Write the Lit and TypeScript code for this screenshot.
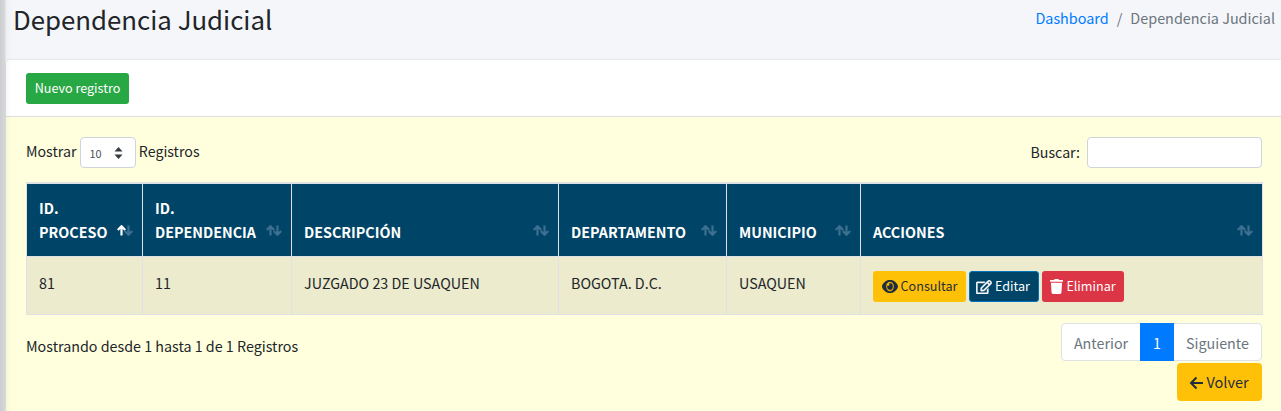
import { LitElement, html, css } from "lit";
import { customElement } from "lit/decorators.js";

const sortIcon = (active = false) => html`<svg class="sort" viewBox="0 0 16 11" width="16" height="11" aria-hidden="true">
  <path class=${active ? "on" : "off"} d="M4.500 10.500V1.500M.8 5 4.500 1.200 8.200 5" />
  <path class="off" d="M11.500.5v9M7.800 6l3.700 3.800L15.200 6" />
</svg>`;

const cols = [
  { label: ["ID.", "PROCESO"], w: 116, active: true },
  { label: ["ID.", "DEPENDENCIA"], w: 149 },
  { label: ["DESCRIPCIÓN"], w: 267 },
  { label: ["DEPARTAMENTO"], w: 168 },
  { label: ["MUNICIPIO"], w: 134 },
  { label: ["ACCIONES"], w: 402 },
];

@customElement("app-root")
export class AppRoot extends LitElement {
  static styles = css`
    :host {
      display: block;
      width: 1281px;
      height: 411px;
      overflow: hidden;
      background: #f4f6f9;
      font-family: "Noto Sans CJK JP", "Noto Sans", sans-serif;
      font-size: 14.3px;
      color: #212529;
      box-sizing: border-box;
      padding-left: 6px;
      position: relative;
    }
    .edge {
      position: absolute;
      left: 0;
      top: 0;
      bottom: 0;
      width: 12px;
      pointer-events: none;
      background: linear-gradient(90deg, rgba(0,0,0,.17), rgba(0,0,0,.12) 5px, rgba(0,0,0,.03) 6px, rgba(0,0,0,0) 12px);
    }
    .top {
      height: 60px;
      display: flex;
      justify-content: space-between;
      padding: 0 6px 0 8px;
      box-sizing: border-box;
    }
    h1 {
      margin: 0 0 0 -1px;
      font-size: 25.8px;
      font-weight: 400;
      line-height: 37px;
    }
    .crumb {
      font-size: 14.4px;
      line-height: 36px;
      color: #6c757d;
      display: flex;
      gap: 8px;
    }
    .crumb a { color: #007bff; }
    .card {
      background: #fff;
      border-radius: 4px 0 0 0;
      box-shadow: 0 0 2px rgba(0, 0, 0, 0.2);
      height: 351px;
    }
    .head {
      height: 57px;
      padding: 13px 20px 0;
      box-sizing: border-box;
      border-bottom: 1px solid #dcdee2;
      background: #fff;
      border-radius: 4px 0 0 0;
    }
    .btn {
      display: inline-flex;
      align-items: center;
      justify-content: center;
      gap: 3px;
      border-radius: 3px;
      font-size: 12.6px;
      line-height: 1;
      height: 31px;
      box-sizing: border-box;
      white-space: nowrap;
    }
    .new { width: 103px; }
    .green { background: #28a745; color: #fff; }
    .amber { background: #ffc107; color: #1f2d3d; }
    .navy { background: #004567; color: #fff; border: 1px solid #0072bd; }
    .red { background: #dc3545; color: #fff; }
    .consult { width: 93px; }
    .edit { width: 70px; padding-right: 2px; }
    .del { width: 82px; }
    .body {
      background: #ffffdd;
      height: 294px;
      padding: 20px 19px 0 20px;
      box-sizing: border-box;
    }
    .controls {
      display: flex;
      justify-content: space-between;
      height: 31px;
      margin-bottom: 14px;
    }
    .len, .search {
      display: flex;
      align-items: center;
      gap: 3px;
      font-size: 14.2px;
      height: 31px;
    }
    .len > span { position: relative; top: -2px; }
    .search > span { position: relative; top: -1px; }
    .select {
      width: 56px;
      height: 31px;
      margin-left: 1px;
      margin-right: -0.6px;
      box-sizing: border-box;
      border: 1px solid #ced4da;
      border-radius: 4px;
      background: #fff;
      display: flex;
      align-items: center;
      justify-content: space-between;
      padding: 0 12px 0 8px;
      font-size: 10.8px;
      color: #495057;
    }
    .search { gap: 7px; }
    .input {
      width: 175px;
      height: 31px;
      box-sizing: border-box;
      border: 1px solid #ced4da;
      border-radius: 4px;
      background: #fff;
    }
    table {
      border-collapse: collapse;
      table-layout: fixed;
      width: 1236px;
      border: 1px solid #dee2e6;
    }
    th {
      background: #004567;
      color: #fff;
      font-size: 14.3px;
      font-weight: 700;
      text-align: left;
      line-height: 24px;
      padding: 12px;
      height: 73px;
      box-sizing: border-box;
      vertical-align: bottom;
      position: relative;
      border-left: 1px solid #dee2e6;
      border-right: 1px solid #dee2e6;
      border-top: 2px solid #dee2e6;
    }
    th div { white-space: nowrap; }
    .sort {
      position: absolute;
      right: 9px;
      bottom: 20px;
      fill: none;
      stroke-width: 2.2;
    }
    .sort path.off { stroke: #3d7090; }
    .sort path.on { stroke: #fff; }
    td {
      background: #ecebcd;
      font-size: 14.3px;
      height: 58px;
      padding: 0 12px;
      box-sizing: border-box;
      border: 1px solid #dee2e6;
      white-space: nowrap;
      position: relative;
    }
    td span.cell { position: relative; top: -3px; }
    .actions { display: flex; gap: 3px; padding-top: 2px; }
    .foot {
      display: flex;
      justify-content: space-between;
      align-items: flex-start;
      padding-top: 8px;
    }
    .info { font-size: 14.3px; padding-top: 12px; }
    .right { display: flex; flex-direction: column; align-items: flex-end; gap: 2px; }
    .pager {
      display: flex;
      width: 201px;
      height: 38px;
      border: 1px solid #dee2e6;
      border-radius: 4px;
      box-sizing: border-box;
      background: #fff;
      font-size: 14.3px;
      color: #6c757d;
      align-items: stretch;
    }
    .pager span { display: flex; align-items: center; justify-content: center; flex: none; }
    .pager .prev { width: 78px; }
    .pager .cur { background: #007bff; color: #fff; margin: -1px 0; width: 34px; }
    .pager .next { width: 87px; }
    .back { width: 85px; height: 38px; font-size: 14.5px; border-radius: 4px; padding: 1px 1px 0 0; }
    svg.ic { display: block; flex: none; }
    svg.bold path { stroke: currentColor; stroke-width: 14; }
  `;

  render() {
    return html`
      <div class="top">
        <h1>Dependencia Judicial</h1>
        <div class="crumb"><a>Dashboard</a><span>/</span><span>Dependencia Judicial</span></div>
      </div>
      <div class="card">
        <div class="head"><span class="btn green new">Nuevo registro</span></div>
        <div class="body">
          <div class="controls">
            <div class="len">
              <span>Mostrar</span>
              <div class="select">
                <span>10</span>
                <svg width="9" height="14" viewBox="0 0 9 14" aria-hidden="true"><path fill="#343a40" d="M4.500 1 8.500 5.600H.5zM4.500 13 .5 8.400h8z"/></svg>
              </div>
              <span>Registros</span>
            </div>
            <div class="search"><span>Buscar:</span><div class="input"></div></div>
          </div>
          <table>
            <colgroup>${cols.map((c) => html`<col style="width:${c.w}px" />`)}</colgroup>
            <thead>
              <tr>
                ${cols.map(
                  (c) => html`<th>${c.label.map((l) => html`<div>${l}</div>`)}${sortIcon(!!c.active)}</th>`
                )}
              </tr>
            </thead>
            <tbody>
              <tr>
                <td><span class="cell">81</span></td>
                <td><span class="cell">11</span></td>
                <td><span class="cell">JUZGADO 23 DE USAQUEN</span></td>
                <td><span class="cell">BOGOTA. D.C.</span></td>
                <td><span class="cell">USAQUEN</span></td>
                <td>
                  <div class="actions">
                    <span class="btn amber consult">
                      <svg class="ic bold" width="16" height="13" viewBox="0 64 576 384" preserveAspectRatio="none" aria-hidden="true"><path fill="currentColor" d="M572.520 241.400C518.290 135.590 410.930 64 288 64S57.680 135.640 3.480 241.410a32.350 32.350 0 0 0 0 29.190C57.710 376.410 165.070 448 288 448s230.320-71.640 284.520-177.410a32.350 32.350 0 0 0 0-29.190zM288 400a144 144 0 1 1 144-144 143.930 143.930 0 0 1-144 144zm0-240a95.310 95.310 0 0 0-25.310 3.790 47.850 47.850 0 0 1-66.900 66.900A95.780 95.780 0 1 0 288 160z"/></svg>
                      Consultar
                    </span>
                    <span class="btn navy edit">
                      <svg class="ic bold" width="16" height="14" viewBox="0 0 576 512" aria-hidden="true"><path fill="currentColor" d="m402.300 344.900 32-32c5-5 13.700-1.500 13.700 5.700V464c0 26.500-21.500 48-48 48H48c-26.500 0-48-21.500-48-48V112c0-26.500 21.500-48 48-48h273.500c7.100 0 10.700 8.600 5.700 13.700l-32 32c-1.500 1.500-3.500 2.300-5.700 2.300H48v352h352V350.500c0-2.100.8-4.100 2.300-5.600zm156.600-201.800L296.300 405.700l-90.400 10c-26.200 2.900-48.500-19.200-45.600-45.600l10-90.400L432.900 17.100c22.900-22.900 59.900-22.900 82.700 0l43.200 43.200c22.900 22.900 22.900 60 .1 82.800zM460.100 174 402 115.900 216.200 301.800l-7.300 65.300 65.300-7.300L460.100 174zm64.800-79.700-43.200-43.200c-4.100-4.100-10.800-4.100-14.800 0L436 82l58.100 58.100 30.900-30.900c4-4.200 4-10.800-.1-14.900z"/></svg>
                      Editar
                    </span>
                    <span class="btn red del">
                      <svg class="ic" width="13" height="15" viewBox="0 0 448 512" aria-hidden="true"><path fill="currentColor" d="M432 32H312l-9.400-18.700A24 24 0 0 0 281.100 0H166.800a23.720 23.720 0 0 0-21.400 13.300L136 32H16A16 16 0 0 0 0 48v32a16 16 0 0 0 16 16h416a16 16 0 0 0 16-16V48a16 16 0 0 0-16-16zM53.200 467a48 48 0 0 0 47.900 45h245.800a48 48 0 0 0 47.900-45L416 128H32z"/></svg>
                      Eliminar
                    </span>
                  </div>
                </td>
              </tr>
            </tbody>
          </table>
          <div class="foot">
            <div class="info">Mostrando desde 1 hasta 1 de 1 Registros</div>
            <div class="right">
              <div class="pager"><span class="prev">Anterior</span><span class="cur">1</span><span class="next">Siguiente</span></div>
              <span class="btn amber back">
                <svg class="ic" width="14" height="14" viewBox="0 0 14 14" aria-hidden="true"><path fill="none" stroke="currentColor" stroke-width="2" d="M14 7H2M7.500 1.500 2 7l5.500 5.500"/></svg>
                Volver
              </span>
            </div>
          </div>
        </div>
      </div>
      <div class="edge"></div>
    `;
  }
}
